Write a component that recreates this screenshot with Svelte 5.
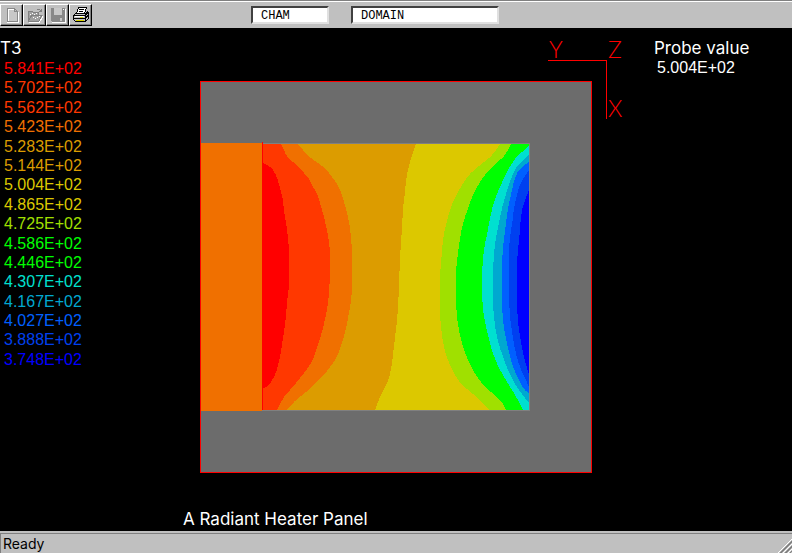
<script>
  const legend = [
    { value: '5.841E+02', color: '#ff0000' },
    { value: '5.702E+02', color: '#ff3800' },
    { value: '5.562E+02', color: '#ff3800' },
    { value: '5.423E+02', color: '#f07000' },
    { value: '5.283E+02', color: '#dc9c00' },
    { value: '5.144E+02', color: '#dc9c00' },
    { value: '5.004E+02', color: '#dcc800' },
    { value: '4.865E+02', color: '#dcc800' },
    { value: '4.725E+02', color: '#a0e000' },
    { value: '4.586E+02', color: '#00ff00' },
    { value: '4.446E+02', color: '#00ff00' },
    { value: '4.307E+02', color: '#00e0d0' },
    { value: '4.167E+02', color: '#00a8d0' },
    { value: '4.027E+02', color: '#0060ff' },
    { value: '3.888E+02', color: '#0040f0' },
    { value: '3.748E+02', color: '#0000ff' }
  ];

  const core = '262,162 265,164 271,167 275,173 278,180 280,189 283,198 284,213 287,227 288,240 289,248 289,289 287,300 286,318 284,331 282,345 280,357 277,370 274,377 271,382 268,386 262,389';

  // left edge of each band; the fill runs from there to the right wall
  const bands = [
    { color: '#f07000', edge: '281,144 284,150 287,157 291,161 295,163 299,167 304,173 310,180 313,187 317,193 321,206 324,217 327,230 329,242 330,252 330,281 328,304 326,315 323,328 320,339 316,351 313,360 307,369 300,378 293,387 287,393 282,400 277,410' },
    { color: '#dc9c00', edge: '298,144 303,150 309,157 318,163 325,168 332,177 338,185 342,195 345,205 348,217 350,227 351,238 352,250 352,288 351,303 349,312 347,325 343,340 339,352 334,362 327,371 321,378 313,386 305,393 297,399 292,404 287,410' },
    { color: '#dcc800', edge: '416,144 412,155 409,165 406,180 405,193 403,207 402,229 400,257 399,285 398,310 396,330 394,345 392,365 388,382 385,387 381,395 378,402 375,410' },
    { color: '#a0e000', edge: '500,144 493,155 484,162 470,173 462,185 455,197 450,210 447,220 443,238 441,263 440,275 440,318 442,337 445,352 449,363 456,377 462,385 472,393 482,402 489,410' },
    { color: '#00ff00', edge: '511,144 506,155 496,163 486,173 478,185 472,197 468,208 463,223 460,238 458,253 456,268 456,312 460,337 465,353 471,367 479,380 486,388 495,395 503,403 506,410' },
    { color: '#00e0d0', edge: '529,146 518,155 512,163 506,173 501,185 495,198 490,217 487,235 484,248 482,270 482,302 485,323 489,340 494,357 500,370 507,382 514,393 519,402 523,410' },
    { color: '#00a8d0', edge: '529,155 520,162 513,173 509,185 504,200 501,213 497,232 495,243 493,265 493,308 495,327 498,342 503,357 508,370 514,383 521,393 529,403' },
    { color: '#0060ff', edge: '529,162 520,168 515,177 512,190 508,208 506,223 504,238 502,258 502,310 504,330 508,348 512,365 518,378 522,387 529,394' },
    { color: '#0040f0', edge: '529,170 522,180 518,190 514,207 513,218 510,237 509,250 509,312 513,338 516,355 521,370 526,380 529,387' },
    { color: '#0000ff', edge: '529,190 524,202 521,215 520,230 518,250 517,262 517,315 520,337 523,353 526,365 529,374' }
  ];

  // rounds the corners by running a curve through the segment midpoints
  function smooth(edge) {
    const pts = edge.split(' ').map((p) => p.split(',').map(Number));
    let d = `M${pts[0]}`;
    for (let i = 1; i < pts.length - 1; i++) {
      const [x, y] = pts[i];
      const [nx, ny] = pts[i + 1];
      d += `Q${x},${y} ${(x + nx) / 2},${(y + ny) / 2}`;
    }
    return `${d}L${pts[pts.length - 1]}`;
  }

  let simulation = $state('CHAM');
  let object = $state('DOMAIN');
</script>

<div class="app">
  <header class="toolbar">
    <div class="buttons">
      <button type="button" aria-label="New" disabled>
        <svg viewBox="0 0 16 16">
          <path d="M3.500 1.500h7l3 3v10h-10zM10.500 1.500v3h3" fill="#c8c8c8" stroke="#888" />
          <path d="M3 15.500h11.500V5M4.500 14V2.500h5" fill="none" stroke="#fff" />
        </svg>
      </button>
      <button type="button" aria-label="Open" disabled>
        <svg viewBox="0 0 16 16">
          <path d="M1 4h4l1 1h6v3h4l-4 6H1z" fill="#a0a0a0" />
          <path d="M9.500 2.500h3l2 2M14.500 1.500v3h-3M1.500 13.500v-9h4l1 1h5v2M2 13l3-5h10l-3 6H1" fill="none" stroke="#808080" />
          <path d="M3 7.500h1M5 6.500h1M7 7.500h1M9 6.500h1M6 10.500h1M8 11.500h1M10 10.500h1M12 9.500h1M2 15.500h10l4-6" fill="none" stroke="#fff" />
        </svg>
      </button>
      <button type="button" aria-label="Save" disabled>
        <svg viewBox="0 0 16 16">
          <path d="M1 1h14v14H2l-1-1z" fill="#888" />
          <path d="M4 1h8v7H4zM10 11h2v3h-2z" fill="#c8c8c8" />
          <path d="M2 15.500h13.500V2M13 2.500h1" fill="none" stroke="#fff" />
        </svg>
      </button>
      <button type="button" aria-label="Print">
        <svg viewBox="0 0 16 16">
          <path d="M5.500 0.500h8l-2 6h-8z" fill="#fff" stroke="#000" />
          <path d="M6 2.500h5M6 4.500h4" stroke="#000" />
          <path d="M2.500 6.500h10l2-2 1 1v6l-3 3h-10l-2-2v-4z" fill="#c0c0c0" stroke="#000" />
          <path d="M1 8.500h11l3-3M1 11.500h11l3-3M12.500 8v6" fill="none" stroke="#000" />
          <path d="M2 9.500h9" stroke="#fff" />
          <path d="M7 10.500h3M3 13.500h8" stroke="#d8d000" />
        </svg>
      </button>
    </div>
    <input class="simulation" aria-label="Simulation" spellcheck="false" bind:value={simulation} />
    <input class="object" aria-label="Object" spellcheck="false" bind:value={object} />
  </header>

  <main class="viewport">
    <section class="legend">
      <h2>T3</h2>
      <ul>
        {#each legend as entry (entry.value)}
          <li style:color={entry.color}>{entry.value}</li>
        {/each}
      </ul>
    </section>

    <figure>
      <svg class="plot" viewBox="200 30 424 444" role="img" aria-label="Temperature contours">
        <rect x="200" y="81" width="392" height="392" fill="#ff0000" />
        <rect x="201" y="82" width="390" height="390" fill="#6c6c6c" />
        <rect x="262" y="143" width="268" height="268" fill="#808080" />
        <rect x="201" y="143" width="61" height="268" fill="#f07000" />

        <rect x="262" y="144" width="267" height="266" fill="#ff3800" />
        {#each bands as band (band.color)}
          <path d="{smooth(band.edge)}L529,410V144z" fill={band.color} />
        {/each}
        <path d="{smooth(core)}z" fill="#ff0000" />
        <rect x="262" y="142" width="1" height="268" fill="#ff0000" />

        <g class="axes">
          <path d="M548 60.500h58.500V119" />
          <text x="549" y="58">Y</text>
          <text x="608" y="58">Z</text>
          <text x="608" y="117">X</text>
        </g>
      </svg>
      <figcaption>A Radiant Heater Panel</figcaption>
    </figure>

    <section class="probe">
      <h2>Probe value</h2>
      <output>5.004E+02</output>
    </section>
  </main>

  <footer class="status">
    <span>Ready</span>
    <svg class="grip" viewBox="0 0 14 14">
      <path d="M0 14L14 0M5 14L14 5M10 14L14 10" stroke="#fff" />
      <path d="M2 14L14 2M3 14L14 3M7 14L14 7M8 14L14 8M12 14L14 12" stroke="#808080" />
    </svg>
  </footer>
</div>

<style>
  :global(body) {
    margin: 0;
    background: #000;
  }

  .app {
    display: flex;
    flex-direction: column;
    min-height: 100vh;
    font-family: 'Liberation Sans', Arial, sans-serif;
    font-size: 16px;
    color: #fff;
  }

  .toolbar {
    display: flex;
    align-items: flex-start;
    box-sizing: border-box;
    height: 28px;
    padding-top: 3px;
    border-top: 1px solid #808080;
    background: #c0c0c0;
    box-shadow: inset 0 1px #fff;
  }

  .buttons {
    display: flex;
    width: 251px;
  }

  button {
    display: flex;
    align-items: center;
    justify-content: center;
    width: 23px;
    height: 22px;
    padding: 0;
    border: 1px solid;
    border-color: #fff #000 #000 #fff;
    background: #c0c0c0;
    box-shadow: inset -1px -1px #808080;
  }

  button svg {
    width: 16px;
    height: 16px;
    shape-rendering: crispEdges;
  }

  input {
    box-sizing: border-box;
    height: 18px;
    margin-top: 2px;
    padding: 1px 8px 0;
    border: 2px solid;
    border-color: #404040 #e0e0e0 #e0e0e0 #404040;
    border-radius: 0;
    outline: none;
    background: #fff;
    color: #000;
    font-family: 'Liberation Mono', 'Courier New', monospace;
    font-size: 12px;
  }

  .simulation {
    width: 78px;
    margin-right: 22px;
  }

  .object {
    width: 148px;
  }

  .viewport {
    display: grid;
    grid-template-columns: 183px 1fr 138px;
    flex: 1;
    background: #000;
  }

  h2,
  figcaption {
    margin: 0;
    font-family: Inter, sans-serif;
    font-size: 17px;
    font-weight: 400;
    line-height: 20px;
  }

  .legend,
  .probe {
    padding-top: 10px;
  }

  ul {
    display: flex;
    flex-direction: column;
    justify-content: space-between;
    height: 310px;
    margin: 1px 0 0;
    padding: 0 0 0 4px;
    list-style: none;
    line-height: 19px;
  }

  figure {
    margin: 0;
    padding-top: 2px;
  }

  .plot {
    display: block;
    width: 424px;
    height: 444px;
    margin: 0 0 35px 17px;
    shape-rendering: crispEdges;
  }

  .axes path {
    fill: none;
    stroke: #ff0000;
  }

  .axes text {
    fill: #ff0000;
    font-family: Lato, sans-serif;
    font-size: 23px;
    font-weight: 300;
  }

  output {
    display: block;
    padding-left: 3px;
    line-height: 20px;
  }

  .status {
    display: flex;
    align-items: center;
    justify-content: space-between;
    box-sizing: border-box;
    height: 23px;
    border-top: 2px solid #c0c0c0;
    border-bottom: 1px solid #fff;
    background: #c0c0c0;
    box-shadow: inset 1px 1px #808080;
    color: #000;
    font-family: Inter, sans-serif;
    font-size: 14px;
  }

  .status span {
    padding-left: 3px;
  }

  .grip {
    align-self: flex-end;
    width: 14px;
    height: 14px;
  }
</style>
